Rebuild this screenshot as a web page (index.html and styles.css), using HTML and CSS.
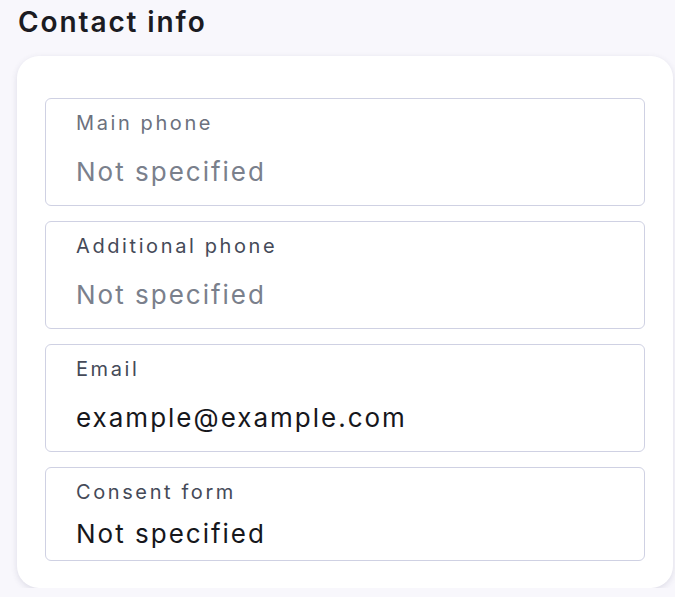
FILE: index.html
```html
<!DOCTYPE html>
<html>
<head>
<meta charset="utf-8">
<link rel="stylesheet" href="styles.css">
</head>
<body>
<main class="page">
  <h1 class="title">Contact info</h1>
  <section class="card">
    <div class="field field-input">
      <span class="label label-muted">Main phone</span>
      <span class="value value-muted">Not specified</span>
    </div>
    <div class="field field-input">
      <span class="label">Additional phone</span>
      <span class="value value-muted">Not specified</span>
    </div>
    <div class="field field-input">
      <span class="label">Email</span>
      <span class="value">example@example.com</span>
    </div>
    <div class="field field-static">
      <span class="label">Consent form</span>
      <span class="value">Not specified</span>
    </div>
  </section>
</main>
</body>
</html>
```
FILE: styles.css
```css
html, body {
  margin: 0;
  padding: 0;
  background: #f8f7fc;
  font-family: "Inter", "Liberation Sans", sans-serif;
}
.page {
  padding: 4px 2px 0 17px;
}
.title {
  margin: 0;
  font-size: 28px;
  font-weight: 600;
  color: #1b1b22;
  line-height: 36px;
  letter-spacing: 1.9px;
  padding-left: 1px;
}
.card {
  margin-top: 16px;
  background: #ffffff;
  border-radius: 22px;
  box-shadow: 0 2px 6px rgba(60, 60, 100, 0.14);
  padding: 42px 28px 27px 28px;
  display: flex;
  flex-direction: column;
  gap: 15px;
}
.field {
  border: 1.5px solid #cfd1e3;
  border-radius: 6px;
  display: flex;
  flex-direction: column;
  padding: 0 30px;
}
.field-input {
  height: 108px;
  box-sizing: border-box;
  padding-top: 12px;
  gap: 21px;
}
.field-static {
  height: 94px;
  box-sizing: border-box;
  padding-top: 12px;
  gap: 14px;
}
.label {
  font-size: 20px;
  line-height: 24px;
  color: #454a58;
  letter-spacing: 2.6px;
}
.label-muted {
  color: #6c717e;
}
.value {
  font-size: 26px;
  line-height: 32px;
  color: #16171c;
  letter-spacing: 2px;
}
.value-muted {
  color: #7a808c;
}
```
